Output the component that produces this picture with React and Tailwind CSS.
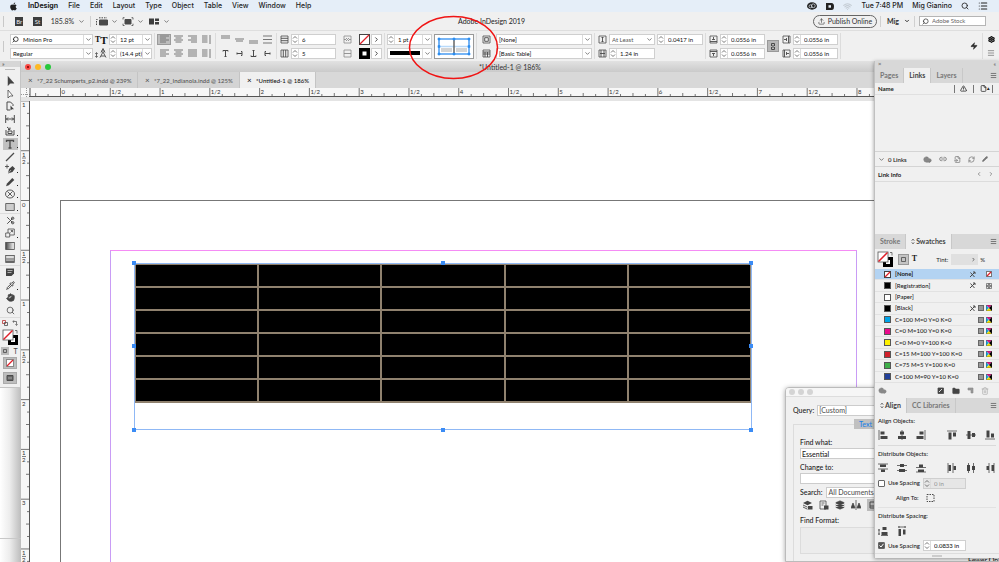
import { ChevronDown, ChevronRight, ChevronLeft, Search, Wifi, List, Hand, Scissors, Pipette, Pencil, Link2, RefreshCw, Cloud, Trash2, Folder, Layers, TriangleAlert, File, FileInput, Upload, Settings, Zap, Menu } from "lucide-react";
import { FaApple } from "react-icons/fa";

const MENUS = ["File", "Edit", "Layout", "Type", "Object", "Table", "View", "Window", "Help"];

const SWATCHES = [
  { name: "[None]", kind: "none", locked: true },
  { name: "[Registration]", color: "#000000", kind: "registration", locked: true },
  { name: "[Paper]", color: "#ffffff", kind: "paper" },
  { name: "[Black]", color: "#000000", kind: "cmyk", locked: true },
  { name: "C=100 M=0 Y=0 K=0", color: "#00a3e8", kind: "cmyk" },
  { name: "C=0 M=100 Y=0 K=0", color: "#ea0a8c", kind: "cmyk" },
  { name: "C=0 M=0 Y=100 K=0", color: "#fff200", kind: "cmyk" },
  { name: "C=15 M=100 Y=100 K=0", color: "#d0202a", kind: "cmyk" },
  { name: "C=75 M=5 Y=100 K=0", color: "#3fae49", kind: "cmyk" },
  { name: "C=100 M=90 Y=10 K=0", color: "#21409a", kind: "cmyk" },
];

// half an inch on the rulers, in px
const HALF = 49.78;

/* ---------- small building blocks ---------- */

function Sep() {
  return <span className="w-px h-[26px] bg-[#dcdcdc] shrink-0" />;
}

function Icon({ children, w = 10, h = 10, className = "" }) {
  return (
    <svg width={w} height={h} viewBox={`0 0 ${w} ${h}`} fill="none" stroke="#4a4a4a" strokeWidth="1" className={`shrink-0 ${className}`}>
      {children}
    </svg>
  );
}

function Chevron() {
  return <ChevronDown size={7} strokeWidth={2.5} className="text-[#555] shrink-0" />;
}

function SpinArrows() {
  return (
    <Icon w={6} h={9}>
      <path d="M1 3.5 3 1.5 5 3.5M1 5.5 3 7.5 5 5.5" stroke="#555" strokeWidth=".8" />
    </Icon>
  );
}

function SelectBox({ label, value, className = "", boxed = true, children }) {
  return (
    <label className={`flex items-center h-[11px] bg-white border border-[#cfcfcf] ${className}`}>
      {children}
      <select aria-label={label} className="flex-1 min-w-0 appearance-none bg-transparent pl-[2px] text-[6px] leading-[9px] outline-none">
        <option>{value}</option>
      </select>
      <span className={boxed ? "w-[9px] h-full grid place-items-center border-l border-[#dcdcdc]" : "w-[9px] h-full grid place-items-center"}>
        <Chevron />
      </span>
    </label>
  );
}

function Spin({ label, value, className = "", menu = false, disabled = false }) {
  return (
    <label className={`flex items-center h-[11px] border border-[#cfcfcf] ${disabled ? "bg-[#e6e6e6] text-[#999]" : "bg-white"} ${className}`}>
      <SpinArrows />
      <input aria-label={label} defaultValue={value} disabled={disabled} className="flex-1 min-w-0 border-l border-[#dcdcdc] pl-[3px] text-[6px] leading-[9px] h-full bg-transparent outline-none" />
      {menu && (
        <span className="w-[9px] h-full grid place-items-center border-l border-[#dcdcdc]">
          <Chevron />
        </span>
      )}
    </label>
  );
}

function Pair({ children, className = "" }) {
  return <div className={`flex flex-col gap-[3px] shrink-0 ${className}`}>{children}</div>;
}

function Cell({ children, label, on = false, className = "" }) {
  return (
    <button aria-label={label} className={`h-[11px] grid place-items-center ${on ? "bg-[#bdbdbd] border border-[#9b9b9b]" : ""} ${className}`}>
      {children}
    </button>
  );
}

function NoneBox({ size = 10, border = "#444" }) {
  return (
    <Icon w={size} h={size}>
      <rect x=".5" y=".5" width={size - 1} height={size - 1} fill="#fff" stroke={border} />
      <path d={`M1 ${size - 1} ${size - 1} 1`} stroke="#e0202a" strokeWidth="1.3" />
    </Icon>
  );
}

function FillStroke() {
  return (
    <Icon w={17} h={17}>
      <rect x="7.5" y="7.5" width="7" height="7" stroke="#000" strokeWidth="3" fill="#fff" />
      <rect x="1" y="1" width="10" height="10" fill="#fff" stroke="#555" strokeWidth=".8" />
      <path d="M1.5 10.5 10.5 1.5" stroke="#e0202a" strokeWidth="1.5" />
      <path d="M13 1.5h2v3" stroke="#555" strokeWidth=".8" />
    </Icon>
  );
}

/* ---------- top bars ---------- */

function MenuBar() {
  return (
    <header className="h-3 shrink-0 flex items-center justify-between bg-[#e5eef8] pl-[9px] pr-[11px] font-['Inter',sans-serif] text-[7px] leading-[12px] font-medium text-[#222]">
      <nav className="flex items-center gap-[10px]">
        <a href="#apple" aria-label="Apple"><FaApple size={9} /></a>
        <a href="#app" className="font-bold">InDesign</a>
        {MENUS.map((m) => (
          <a href="#menu" key={m}>{m}</a>
        ))}
      </nav>
      <div className="flex items-center gap-[9px]">
        <Icon w={10} h={8}>
          <ellipse cx="5" cy="4" rx="5" ry="3.7" fill="#222" stroke="none" />
          <circle cx="3.5" cy="4.3" r="1.5" stroke="#e5eef8" strokeWidth=".7" />
          <circle cx="6.3" cy="3.8" r="1.9" stroke="#e5eef8" strokeWidth=".7" />
        </Icon>
        <Icon w={8} h={7}>
          <path d="M0 0h5.5a2.5 3.5 0 0 1 0 7H0z" fill="#222" stroke="none" />
          <path d="M2.5 2.2h2.5v2.5H2.5z" fill="#e5eef8" stroke="none" />
        </Icon>
        <Wifi size={9} strokeWidth={3} className="text-[#c4ccd4]" />
        <span>Tue 7:48 PM</span>
        <span>Mig Gianino</span>
        <Search size={8} strokeWidth={2.5} />
        <List size={10} strokeWidth={2.5} />
      </div>
    </header>
  );
}

function AppBar() {
  return (
    <div className="h-[19px] shrink-0 flex items-center bg-[#f0f0f0] border-b border-[#dedede] text-[7px] text-[#333]">
      <div className="flex items-center w-[170px] pl-[3px]">
        <span className="w-px h-[11px] bg-[#c8c8c8] mr-[11px]" />
        <span className="w-[9px] h-[9px] bg-[#3d3d3d] text-[#eee] text-[6px] leading-[9px] text-center mr-[10px]">Br</span>
        <span className="w-[9px] h-[9px] bg-[#3d3d3d] text-[#eee] text-[6px] leading-[9px] text-center mr-[9px]">St</span>
        <label className="flex items-center w-[37px]">
          <select aria-label="Zoom level" className="flex-1 min-w-0 appearance-none bg-transparent outline-none">
            <option>185.8%</option>
          </select>
          <Chevron />
        </label>
        <span className="w-px h-[11px] bg-[#d0d0d0] mx-[5px]" />
        <div className="flex items-center gap-[2px]">
          <Icon w={12} h={9} className="mr-px"><path d="M3.5 3h8v5h-8z" fill="#4a4a4a" /><path d="M.5 8V2.5h2M3 .8h8" strokeDasharray="1.5 1" /></Icon>
          <Chevron />
          <Icon w={12} h={9} className="ml-[2px] mr-px"><path d="M3 2.5h6v4.5H3z" fill="#4a4a4a" /><path d="M1 2.5V.7h1.500M9.500.7H11v1.800M11 6.700v1.800H9.500M2.500 8.500H1V6.700" strokeWidth=".8" /></Icon>
          <Chevron />
          <Icon w={12} h={9} className="ml-[2px] mr-px"><path d="M1 1.5h5v6H1zM7 1.5h4v2.5H7zM7 5h4v2.5H7z" fill="#3d3d3d" stroke="none" /></Icon>
          <Chevron />
        </div>
      </div>
      <h1 className="flex-1 text-center text-[#222]">Adobe InDesign 2019</h1>
      <div className="flex items-center pr-[13px]">
        <button className="flex items-center justify-center gap-[3px] w-[64px] h-[13px] rounded-full border border-[#666] text-[7px] whitespace-nowrap">
          <Upload size={7} strokeWidth={2} />Publish Online
        </button>
        <span className="w-px h-[11px] bg-[#d0d0d0] mx-[3px]" />
        <button className="flex items-center justify-between w-[23px] ml-[3px] font-bold text-[7px]">
          Mig<ChevronDown size={6} strokeWidth={4} />
        </button>
        <span className="w-px h-[11px] bg-[#d0d0d0] ml-[4px] mr-[4px]" />
        <label className="flex items-center w-[67px] h-[10px] bg-white border border-[#b5b5b5] pl-[2px] gap-[3px]">
          <Search size={7} strokeWidth={2.5} className="-scale-x-100" />
          <input aria-label="Search Adobe Stock" placeholder="Adobe Stock" className="min-w-0 flex-1 text-[6px] leading-[8px] outline-none placeholder:text-[#666]" />
        </label>
      </div>
    </div>
  );
}

const LINES = {
  left: "M0 1h9M0 3h6M0 5h9M0 7h6",
  center: "M0 1h9M1.5 3h6M0 5h9M1.5 7h6",
  right: "M0 1h9M3 3h6M0 5h9M3 7h6",
  full: "M0 1h9M0 3h9M0 5h9M0 7h9",
  spine: "M0 1h5.5M0 3h5.5M0 5h5.5M0 7h5.5M8 0v9",
};

function Lines({ kind }) {
  return (
    <Icon w={9} h={9}>
      <path d={LINES[kind]} stroke="#777" />
    </Icon>
  );
}

function BoxIcon({ d }) {
  return (
    <span className="h-[11px] grid place-items-center">
      <Icon w={9} h={9}>
        <path d="M1 1h7v7H1z" strokeWidth=".8" />
        <path d={d} strokeWidth=".9" />
      </Icon>
    </span>
  );
}

function StrokeProxy() {
  return (
    <button aria-label="Cell border proxy" className="w-10 h-[25px] bg-white border border-[#999] grid place-items-center shrink-0">
      <svg width="36" height="21" viewBox="0 0 36 21">
        <rect x="5" y="12" width="11" height="4" fill="#d4d4d4" />
        <rect x="20" y="12" width="11" height="4" fill="#d4d4d4" />
        <path d="M3 10.5h30" stroke="#b9dafa" strokeWidth="1.500" />
        <path d="M18 3v15" stroke="#666" strokeWidth="1.500" />
        <rect x="3" y="3" width="30" height="15" fill="none" stroke="#2d8df0" strokeWidth="1.300" />
        <path d="M2 2h2v2H2zM17 2h2v2h-2zM32 2h2v2h-2zM2 9.5h2v2H2zM32 9.5h2v2h-2zM2 17h2v2H2zM17 17h2v2h-2zM32 17h2v2h-2z" fill="#2d8df0" stroke="#2d8df0" strokeWidth=".6" />
      </svg>
    </button>
  );
}

function ControlBar() {
  return (
    <div className="h-[30px] shrink-0 flex items-center gap-[2px] bg-[#f0f0f0] pl-[3px] pr-[4px] text-[6px] text-[#111]">
      <span className="w-px h-[11px] bg-[#c8c8c8] mr-[4px]" />
      <Pair className="w-[83px]">
        <SelectBox label="Font" value="Minion Pro">
          <Search size={7} strokeWidth={2.5} className="-scale-x-100 ml-px mr-[2px]" />
        </SelectBox>
        <SelectBox label="Font style" value="Regular" />
      </Pair>
      <Pair className="w-3">
        <span className="h-[11px] flex items-end leading-[10px] font-['Liberation_Serif',serif] font-bold"><span className="text-[8px]">T</span><span className="text-[11px]">T</span></span>
        <span className="h-[11px] grid place-items-center">
          <Icon w={12} h={10}><path d="M1.5 5v4M.3 6 1.5 4.5 2.7 6M.3 8 1.5 9.500 2.700 8" strokeWidth=".8" /><path d="M6 4.500 8 .5l2 4M6.500 3h3M5 9.500 8 4l3 5.500M6 8h4" strokeWidth=".9" /></Icon>
        </span>
      </Pair>
      <Pair className="w-[43px]">
        <Spin label="Font size" value="12 pt" menu />
        <Spin label="Leading" value="(14.4 pt)" menu />
      </Pair>
      <Sep />
      <div className="grid grid-cols-4 gap-y-[3px] w-14 shrink-0">
        <Cell label="Align left" on><Lines kind="left" /></Cell>
        <Cell label="Align center"><Lines kind="center" /></Cell>
        <Cell label="Align right"><Lines kind="right" /></Cell>
        <Cell label="Align towards spine"><Lines kind="spine" /></Cell>
        <Cell label="Justify left"><Lines kind="left" /></Cell>
        <Cell label="Justify center"><Lines kind="center" /></Cell>
        <Cell label="Justify all"><Lines kind="full" /></Cell>
        <Cell label="Align away from spine"><Lines kind="spine" /></Cell>
      </div>
      <Sep />
      <div className="grid grid-cols-4 gap-y-[3px] w-14 shrink-0">
        <Cell label="Top"><Icon w={9} h={9}><path d="M0 1h9M0 3h9" stroke="#777" strokeWidth="1.200" /></Icon></Cell>
        <Cell label="Middle"><Icon w={9} h={9}><path d="M0 4h9M1 6h7" stroke="#777" strokeWidth="1.200" /></Icon></Cell>
        <Cell label="Bottom"><Icon w={9} h={9}><path d="M0 6h9M0 8h9" stroke="#777" strokeWidth="1.200" /></Icon></Cell>
        <Cell label="Justify vertically"><Icon w={9} h={9}><path d="M0 1h9M0 4.5h9M0 8h9" stroke="#777" /></Icon></Cell>
        <Cell label="Rotate 0"><Icon w={9} h={9}><path d="M2 2.5V1.5h5v1M4.5 1.5v6M3.5 7.5h2" /></Icon></Cell>
        <Cell label="Rotate 90"><Icon w={9} h={9}><path d="M6 2.5h1v4H6M7 4.5H2M2 3.5v2" /></Icon></Cell>
        <Cell label="Rotate 180"><Icon w={9} h={9}><path d="M2 6.5v1h5v-1M4.5 7.5v-6M3.5 1.5h2" /></Icon></Cell>
        <Cell label="Rotate 270"><Icon w={9} h={9}><path d="M3 2.5H2v4h1M2 4.5h5M7 3.5v2" /></Icon></Cell>
      </div>
      <Sep />
      <Pair className="w-[10px]">
        <BoxIcon d="M1 3.3h7M1 5.7h7" />
        <BoxIcon d="M3.3 1v7M5.7 1v7" />
      </Pair>
      <Pair className="w-[45px]">
        <Spin label="Rows" value="6" />
        <Spin label="Columns" value="5" />
      </Pair>
      <Pair className="w-[19px] opacity-60">
        <BoxIcon d="M1 4.5h2M8 4.5H6M3 3l1.5 1.5L3 6M6 3 4.5 4.5 6 6" />
        <BoxIcon d="M1 4.5h7" />
      </Pair>
      <div className="grid grid-cols-2 gap-x-px gap-y-[3px] w-[23px] shrink-0">
        <Cell label="Fill"><NoneBox size={11} /></Cell>
        <Cell label="Fill options" className="bg-white border border-[#cfcfcf]"><ChevronRight size={7} strokeWidth={2.5} /></Cell>
        <Cell label="Stroke"><Icon w={11} h={11}><path d="M0 0h11v11H0z" fill="#000" stroke="none" /><path d="M3.5 3.5h4v4h-4z" fill="#fff" stroke="none" /></Icon></Cell>
        <Cell label="Stroke options" className="bg-white border border-[#cfcfcf]"><ChevronRight size={7} strokeWidth={2.5} /></Cell>
      </div>
      <Sep />
      <Pair className="w-[45px]">
        <Spin label="Stroke weight" value="1 pt" menu />
        <button aria-label="Stroke type" className="flex items-center h-[11px] bg-white border border-[#cfcfcf]">
          <span className="flex-1 h-[4px] bg-black mx-[2px]" />
          <span className="w-[9px] h-full grid place-items-center border-l border-[#dcdcdc]"><Chevron /></span>
        </button>
      </Pair>
      <StrokeProxy />
      <Sep />
      <Pair className="w-[15px]">
        <BoxIcon d="M2.7 2.7h3.6v3.6H2.7z" />
        <BoxIcon d="M1 3h7M1 5h7M3 3v5M5.5 3v5" />
      </Pair>
      <Pair className="w-[96px]">
        <SelectBox label="Cell style" value="[None]" />
        <SelectBox label="Table style" value="[Basic Table]" />
      </Pair>
      <Sep />
      <Pair className="w-[10px]">
        <BoxIcon d="M4.5 2v5M3.5 3l1-1 1 1M3.5 6l1 1 1-1" />
        <BoxIcon d="M2 4.5h5M3 1v7M6 1v7" />
      </Pair>
      <Pair className="w-[46px]">
        <SelectBox label="Row height mode" value="At Least" boxed={false} className="text-[#555]" />
        <Spin label="Column width" value="1.24 in" />
      </Pair>
      <Pair className="w-[46px]">
        <Spin label="Row height" value="0.0417 in" />
        <span className="h-[11px]" />
      </Pair>
      <Sep />
      <Pair className="w-[10px]">
        <BoxIcon d="M1 6.5h7M3 4.5h3M4.5 2v2.5" />
        <BoxIcon d="M1 2.5h7M3 4.5h3M4.5 4.5V7" />
      </Pair>
      <Pair className="w-[45px]">
        <Spin label="Top inset" value="0.0556 in" />
        <Spin label="Bottom inset" value="0.0556 in" />
      </Pair>
      <button aria-label="Make all settings the same" className="w-3 h-3 bg-[#b8b8b8] border border-[#999] grid place-items-center shrink-0">
        <Icon w={6} h={9}><path d="M1.5 4V1.5h3V4M1.5 5v2.5h3V5M3 3v3" /></Icon>
      </button>
      <Pair className="w-[10px]">
        <BoxIcon d="M6.5 1v7M4.5 3v3M2 4.5h2.5" />
        <BoxIcon d="M2.5 1v7M4.5 3v3M4.5 4.5H7" />
      </Pair>
      <Pair className="w-[45px]">
        <Spin label="Left inset" value="0.0556 in" />
        <Spin label="Right inset" value="0.0556 in" />
      </Pair>
      <Sep />
      <div className="ml-auto flex items-center gap-[4px]">
        <Zap size={8} fill="#333" strokeWidth={1} />
        <Sep />
        <Pair>
          <Cell label="Customize"><Settings size={7} strokeWidth={4} /></Cell>
          <Cell label="Panel menu"><Menu size={8} strokeWidth={2} className="text-[#666]" /></Cell>
        </Pair>
      </div>
    </div>
  );
}

/* ---------- tools ---------- */

const K = "#444";
const TOOL_GROUPS = [
  {
    cls: "h-[139px]",
    tools: [
      { name: "Selection", art: <path d="M3 .5v9l2.3-2.3H9z" fill={K} stroke={K} strokeWidth=".5" /> },
      { name: "Direct selection", art: <path d="M3 1v8l2-2h3z" fill="#fff" strokeWidth=".8" /> },
      { name: "Page", art: <><path d="M2 9V1h3.5L8 3.5V5M2 9h3" /><path d="M5.5 4.5v5l1.5-1.3h2z" fill={K} stroke="none" /></> },
      { name: "Gap", art: <path d="M.7 1v8M9.3 1v8M1 5h8M3 3.5 1.5 5 3 6.5M7 3.5 8.5 5 7 6.5" /> },
      { name: "Content collector", more: true, art: <><path d="M1 4v5h8V4M3 5h4v2.5H3z" /><path d="M2 1l3 2.5V1.5M5 3.5H3" /></> },
      { name: "Type", on: true, more: true, art: <path d="M1.5 3V1.5h7V3M5 1.5v7.500M3.500 9h3" strokeWidth="1.300" /> },
      { name: "Line", art: <path d="M1 9 9 1" strokeWidth="1.200" /> },
      { name: "Pen", more: true, art: <><path d="M3 9.500 4 5l3.500-3L10 4.500 7.500 8z" fill={K} stroke="none" /><path d="M3 9.500 6 6" stroke="#eee" strokeWidth=".6" /><path d="M0 2.500h4M2 .5v4" strokeWidth=".9" /></> },
      { name: "Pencil", more: true, art: <path d="M1 9.300 2 6.500 7.300 1l2 2L3.800 8.300z" fill={K} stroke="none" /> },
      { name: "Frame", more: true, art: <><ellipse cx="5" cy="5" rx="4.5" ry="4" strokeWidth=".9" /><path d="M2.5 2.5l5 5M7.5 2.5l-5 5" strokeWidth=".9" /></> },
      { name: "Rectangle", more: true, art: <path d="M.7 1.5h8.6v7H.7z" fill="#ccc" strokeWidth=".8" /> },
    ],
  },
  {
    cls: "h-[52px]",
    tools: [
      { name: "Scissors", node: <Scissors size={9} strokeWidth={2.5} className="rotate-180" /> },
      { name: "Free transform", more: true, art: <><path d="M.7 5h4v4h-4z" strokeWidth=".8" /><path d="M3 5V1h6.300v6H5M5.5 4.5l2-2M5.8 2.5h1.7v1.7" strokeWidth=".8" /></> },
      { name: "Gradient swatch", art: <><rect x=".7" y="1.5" width="8.6" height="7" fill="url(#grad)" strokeWidth=".8" /></> },
      { name: "Gradient feather", art: <><rect x=".7" y="1.5" width="8.6" height="7" fill="#ddd" strokeWidth=".8" /><path d="M1 5h8" strokeWidth="1.500" stroke="#888" /><path d="M1 7.300h8" strokeWidth="1.500" stroke="#666" /></> },
    ],
  },
  {
    cls: "h-[52px]",
    tools: [
      { name: "Note", art: <><path d="M1 1.5h8v5L6.5 9H1z" fill={K} stroke="none" /><path d="M2.5 3.5h5M2.5 5.5h4" stroke="#ddd" strokeWidth=".7" /></> },
      { name: "Eyedropper", more: true, node: <Pipette size={9} strokeWidth={2.5} /> },
      { name: "Hand", node: <Hand size={9} fill="#444" strokeWidth={2} /> },
      { name: "Zoom", node: <Search size={9} strokeWidth={2} /> },
    ],
  },
];

function Toolbox() {
  return (
    <aside className="w-[21px] shrink-0 flex flex-col bg-[linear-gradient(to_right,#fff,#ededed_45%,#bcbcbc)]">
      <div className="bg-[#f0f0f0] border-r border-b border-[#c4c4c4] text-[#444] flex flex-col">
        <div className="h-[6px] bg-[#d6d6d6] pl-[2px] text-[6px] leading-[5px]">»</div>
        <div className="h-[8px] flex justify-center pt-[2px]"><span className="w-[10px] h-px bg-[#bbb]" /></div>
        {TOOL_GROUPS.map((g) => (
          <div key={g.tools[0].name} className={`${g.cls} flex flex-col items-center border-b border-[#dcdcdc]`}>
            {g.tools.map((t) => (
              <button key={t.name} aria-label={t.name} className={`flex-1 w-[15px] relative grid place-items-center ${t.on ? "bg-[#c0c0c0]" : ""}`}>
                {t.node || (
                  <Icon>
                    <defs><linearGradient id="grad"><stop stopColor="#444" /><stop offset="1" stopColor="#fff" /></linearGradient></defs>
                    {t.art}
                  </Icon>
                )}
                {t.more && <span className="absolute right-0 bottom-[2px] w-px h-px bg-[#222]" />}
              </button>
            ))}
          </div>
        ))}
        <div className="h-[10px] flex items-center justify-center gap-[4px]">
          <Icon w={6} h={6}><path d="M.5.5h3v3h-3z" stroke="#b33" strokeWidth=".8" /><path d="M2.5 2.5h3v3h-3z" strokeWidth=".8" /></Icon>
          <Icon w={6} h={6}><path d="M1 1.5h3.5V5M2 .3.8 1.5 2 2.7M3.3 4.3l1.2 1.2 1.2-1.2" strokeWidth=".7" /></Icon>
        </div>
        <div className="h-[18px] grid place-items-center"><FillStroke /></div>
        <div className="h-[10px] flex items-center justify-center gap-[3px]">
          <button aria-label="Formatting affects container" className="w-[8px] h-[8px] bg-[#bbb] grid place-items-center"><Icon w={4} h={4}><path d="M.5.5h3v3h-3z" strokeWidth=".8" /></Icon></button>
          <button aria-label="Formatting affects text" className="w-[7px] text-[7px] leading-[8px]">T</button>
        </div>
        <button aria-label="Apply none" className="mx-[3px] mt-px h-[12px] bg-[#bdbdbd] border border-[#aaa] grid place-items-center"><NoneBox size={8} border="#888" /></button>
        <button aria-label="Screen mode" className="mx-[3px] my-[3px] h-[12px] bg-[#bdbdbd] border border-[#aaa] grid place-items-center">
          <Icon w={8} h={8}><path d="M1 1.5h6v5H1z" fill="#666" /><path d="M2.5 4h3" stroke="#ddd" strokeDasharray="1 1" /></Icon>
        </button>
      </div>
      <div className="mt-auto h-6 border-t border-[#c8c8c8]" />
    </aside>
  );
}

/* ---------- document window ---------- */

const TABS = [
  { name: "*7_22 Schumperts_p2.indd @ 239%", cls: "w-[117px] bg-[#d4d4d4] text-[#555]" },
  { name: "*7_22_Indianola.indd @ 125%", cls: "w-[102px] bg-[#d4d4d4] text-[#555]" },
  { name: "*Untitled-1 @ 186%", cls: "w-[76px] bg-[#f0f0f0] text-[#111]" },
];

function HRuler() {
  const ticks = [];
  for (let i = -2; i < 76; i++) ticks.push(i);
  return (
    <svg className="w-full h-[9px] bg-[#f7f7f7] shrink-0" fill="none" stroke="#555">
      {ticks.map((i) => {
        const x = 39.5 + (i * HALF) / 4;
        const major = i % 4 === 0;
        return (
          <g key={i}>
            <path d={`M${x} ${major ? 0 : i % 2 === 0 ? 5 : 6}V9`} strokeWidth=".8" />
            {major && (
              <text x={x + 1} y="6" fontSize="6" fill="#333" stroke="none">{i % 8 === 0 ? i / 8 : "1/2"}</text>
            )}
          </g>
        );
      })}
      <path d="M0 6.5h9M5.5 0v9" strokeDasharray="1 1" strokeWidth=".6" />
      <path d="M9 0v9" />
      <path d="M8 8.5h990" />
    </svg>
  );
}

function VRuler() {
  const ticks = [];
  for (let i = -8; i < 32; i++) ticks.push(i);
  return (
    <svg className="w-[9px] h-full bg-[#f7f7f7] shrink-0" fill="none" stroke="#555">
      {ticks.map((i) => {
        const y = 99.5 + (i * HALF) / 4;
        const major = i % 4 === 0;
        return (
          <g key={i}>
            <path d={`M${major ? 0 : i % 2 === 0 ? 5 : 6} ${y}H9`} strokeWidth=".8" />
            {major && i % 8 === 0 && (
              <text x="1" y={y + 6} fontSize="6" fill="#333" stroke="none">{Math.abs(i / 8)}</text>
            )}
            {major && i % 8 !== 0 && (
              <g fill="#333" stroke="none" fontSize="6">
                <text x="1" y={y + 6}>1</text>
                <text x="1" y={y + 13}>2</text>
                <path d={`M1 ${y + 7}h4v.6h-4z`} />
              </g>
            )}
          </g>
        );
      })}
      <path d="M8.5 0v600" />
    </svg>
  );
}

const HANDLES = [
  "left-[-2px] top-[-2px]",
  "left-[307px] top-[-2px]",
  "right-[-1px] top-[-2px]",
  "left-[-2px] top-[81px]",
  "right-[-1px] top-[81px]",
  "left-[-2px] bottom-[-2px]",
  "left-[307px] bottom-[-2px]",
  "right-[-1px] bottom-[-2px]",
];

function Canvas() {
  return (
    <div className="relative flex-1 overflow-hidden bg-white">
      {/* page edge and margin guides */}
      <div className="absolute left-[30px] top-[99px] w-[847px] h-[1096px] border border-[#777]" />
      <div className="absolute left-[80px] top-[149px] w-[747px] h-[996px] border border-[#c99cf5] border-t-[#f58cf5]" />

      {/* selected text frame holding the table */}
      <div className="absolute left-[104px] top-[162px] w-[618px] h-[167px] outline outline-[#8fb8f5] outline-offset-[-1px]">
        <table className="w-full h-[140px] border-collapse bg-black">
          <tbody>
            {[0, 1, 2, 3, 4, 5].map((r) => (
              <tr key={r}>
                {[0, 1, 2, 3, 4].map((c) => (
                  <td key={c} className="border-2 border-[#8f816e]" />
                ))}
              </tr>
            ))}
          </tbody>
        </table>
        {HANDLES.map((h) => (
          <span key={h} className={`absolute w-1 h-1 bg-[#3b8cf5] ${h}`} />
        ))}
      </div>
    </div>
  );
}

function DocumentWindow() {
  return (
    <section className="flex-1 min-w-0 flex flex-col">
      <div className="h-[11px] shrink-0 flex items-center bg-[linear-gradient(#e2e2e2,#cacaca)] rounded-t-sm">
        <div className="flex gap-[4px] pl-[4px] w-[134px]">
          <button aria-label="Close" className="w-[6px] h-[6px] rounded-full bg-[#fb4943] grid place-items-center"><span className="w-[2px] h-[2px] rounded-full bg-[#700]" /></button>
          <button aria-label="Minimize" className="w-[6px] h-[6px] rounded-full bg-[#fdb924]" />
          <button aria-label="Zoom" className="w-[6px] h-[6px] rounded-full bg-[#28c83c]" />
        </div>
        <h2 className="flex-1 text-center pr-[134px] text-[7px] leading-[10px] text-[#333]">*Untitled-1 @ 186%</h2>
      </div>
      <div className="h-4 shrink-0 flex bg-[#d8d8d8]">
        {TABS.map((t) => (
          <button key={t.name} className={`flex items-center pl-[7px] gap-[5px] border-r border-[#c4c4c4] text-[6px] font-medium whitespace-nowrap ${t.cls}`}>
            <span className="w-1 text-[8px]">×</span>{t.name}
          </button>
        ))}
      </div>
      <HRuler />
      <div className="h-1 shrink-0 bg-[#e4e4e4]" />
      <div className="flex-1 min-h-0 flex">
        <VRuler />
        <Canvas />
      </div>
    </section>
  );
}

/* ---------- floating panels ---------- */

function PanelTabs({ tabs, active }) {
  return (
    <div className="h-[15px] shrink-0 flex items-stretch bg-[#d8d8d8] text-[7px]">
      {tabs.map((t) => (
        <button key={t} className={`px-[5px] flex items-center gap-px border-r border-[#c8c8c8] font-bold whitespace-nowrap ${t === active ? "bg-[#f0f0f0] text-[#444]" : "text-[#777]"}`}>
          {t === active && t !== "Links" && <Icon w={4} h={7}><path d="M.7 2.8 2 1l1.300 1.800M.7 4.200 2 6l1.300-1.800" strokeWidth=".7" /></Icon>}
          {t}
        </button>
      ))}
      <button aria-label="Panel menu" className="ml-auto pr-[2px] text-[#555]"><Menu size={7} strokeWidth={2.5} /></button>
    </div>
  );
}

function LinksPanel() {
  return (
    <section>
      <PanelTabs tabs={["Pages", "Links", "Layers"]} active="Links" />
      <div className="h-3 flex items-center pl-[3px] pr-[6px] border-b border-[#e0e0e0] text-[6px] font-bold">
        <span className="flex-1">Name</span>
        <span className="w-px h-[8px] bg-[#777] mr-[5px]" />
        <TriangleAlert size={7} strokeWidth={2.5} />
        <span className="w-px h-[8px] bg-[#777] mx-[6px]" />
        <File size={7} strokeWidth={2.5} />
        <span className="w-[5px] text-[5px]">▴</span>
        <span className="w-px h-[8px] bg-[#777]" />
      </div>
      <div className="h-[56px]" />
      <div className="h-4 flex items-center border-y border-[#d4d4d4] pl-[3px] pr-[11px] text-[6px] font-semibold">
        <Chevron />
        <span className="flex-1 pl-[3px]">0 Links</span>
        <div className="flex items-center gap-[7px] text-[#777]">
          <Cloud size={9} fill="#888" strokeWidth={1.5} />
          <Link2 size={8} strokeWidth={2.5} />
          <FileInput size={7} strokeWidth={2.5} />
          <RefreshCw size={7} strokeWidth={2.5} />
          <Pencil size={6} fill="#777" strokeWidth={2.5} />
        </div>
      </div>
      <div className="h-[15px] flex items-center pl-[3px] pr-[5px] border-b border-[#dcdcdc] text-[6px] font-bold">
        <span className="flex-1">Link Info</span>
        <ChevronLeft size={6} strokeWidth={3} className="mr-[6px] text-[#777]" />
        <ChevronRight size={6} strokeWidth={3} className="text-[#777]" />
      </div>
      <div className="h-[52px]" />
    </section>
  );
}

function CmykIcon() {
  return (
    <svg width="6" height="6" viewBox="0 0 6 6">
      <path d="M0 0h6L3 3z" fill="#e5188c" />
      <path d="M0 0v6l3-3z" fill="#19a7e0" />
      <path d="M0 6h6L3 3z" fill="#f5e400" />
      <path d="M6 0v6L3 3z" fill="#000" />
      <path d="M0 0h6v6H0z" fill="none" stroke="#333" strokeWidth=".5" />
    </svg>
  );
}

function SwatchesPanel() {
  return (
    <section>
      <PanelTabs tabs={["Stroke", "Swatches"]} active="Swatches" />
      <div className="h-5 flex items-center pl-[2px] pr-[14px] text-[6px]">
        <FillStroke />
        <button aria-label="Container" className="w-[11px] h-[11px] ml-[4px] bg-[#c4c4c4] border border-[#999] grid place-items-center"><Icon w={5} h={5}><path d="M.5.5h4v4h-4z" strokeWidth=".8" /></Icon></button>
        <button aria-label="Text" className="w-[9px] ml-px font-['Liberation_Serif',serif] font-bold text-[8px]">T</button>
        <label className="flex items-center ml-auto gap-[3px]">
          Tint:
          <input aria-label="Tint" className="w-[18px] h-[11px] bg-[#e0e0e0]" disabled />
        </label>
        <span className="w-[9px] h-[11px] bg-[#e0e0e0] grid place-items-center mr-[2px]"><ChevronRight size={5} strokeWidth={3} /></span>
        %
      </div>
      <ul className="h-[114px] flex flex-col">
        {SWATCHES.map((s) => (
          <li key={s.name} className={`flex-1 flex items-center pl-[9px] pr-[7px] border-b border-[#e2e2e2] text-[6px] ${s.kind === "none" ? "bg-[#b3d3f2] font-bold" : "font-medium"}`}>
            {s.kind === "none" ? <NoneBox size={7} /> : <span className="w-[7px] h-[7px] border border-[#555]" style={{ backgroundColor: s.color }} />}
            <span className="flex-1 pl-[4px] leading-[10px] whitespace-nowrap">{s.name}</span>
            {s.locked && <Icon w={7} h={7} className={s.kind === "cmyk" ? "mr-[2px]" : "mr-[10px]"}><path d="M1 6 6 1M1.5 1.5l4 4.5M4 1h2v2" /></Icon>}
            {s.kind === "none" && <NoneBox size={6} border="#777" />}
            {s.kind === "registration" && <Icon w={6} h={6}><path d="M.5.5h5v5h-5zM3 0v6M0 3h6" strokeWidth=".6" /><circle cx="3" cy="3" r="1.5" strokeWidth=".6" /></Icon>}
            {s.kind === "cmyk" && (
              <span className="flex gap-[2px]">
                <span className="w-[6px] h-[6px] bg-[#999] border border-[#666]" />
                <CmykIcon />
              </span>
            )}
          </li>
        ))}
      </ul>
      <div className="h-[15px] flex items-center pl-[3px] pr-[10px] gap-[7px] text-[#555]">
        <Cloud size={9} fill="#888" strokeWidth={1} className="mr-auto text-[#888]" />
        <Icon w={8} h={8}><path d="M1 1h5.5v5.5H1z" fill="#444" strokeWidth=".8" /><path d="M2 5 5 2" stroke="#ddd" /></Icon>
        <Folder size={8} fill="#444" strokeWidth={1.5} />
        <Icon w={7} h={7}><path d="M1 1h5v5H4V3H1z" fill="#999" stroke="#888" strokeWidth=".6" /></Icon>
        <Trash2 size={8} strokeWidth={2} className="text-[#aaa]" />
      </div>
    </section>
  );
}

const ALIGN = [
  ["Left edges", "M1 0v10", "M2.5 1.5h4v3h-4zM2.5 6h7v3h-7z"],
  ["Horizontal centers", "M5 0v10", "M3 1.5h4v3H3zM1 6h8v3H1z"],
  ["Right edges", "M9 0v10", "M3.5 1.5h4v3h-4zM.5 6h7v3h-7z"],
  ["Top edges", "M0 1h10", "M1.5 2.5h3v7h-3zM6 2.5h3v4H6z"],
  ["Vertical centers", "M0 5h10", "M1.5 1h3v8h-3zM6 3h3v4H6z"],
  ["Bottom edges", "M0 9h10", "M1.5.5h3v7h-3zM6 3.5h3v4H6z"],
];
const DISTRIBUTE = [
  ["Distribute top", "M0 1h10M0 6h10", "M2 1.5h6v2.5H2zM3 6.5h4V9H3z"],
  ["Distribute middle", "M0 2.5h10M0 7.5h10", "M3 1h4v3H3zM2 6h6v3H2z"],
  ["Distribute bottom", "M0 4.5h10M0 9h10", "M3 1.5h4v3H3zM2 6.5h6V9H2z"],
  ["Distribute left", "M1 0v10M6 0v10", "M1.5 2H4v6H1.5zM6.5 3H9v4H6.5z"],
  ["Distribute center", "M2.5 0v10M7.5 0v10", "M1 2h3v6H1zM6 3h3v4H6z"],
  ["Distribute right", "M4 0v10M9 0v10", "M1.5 3H4v4H1.5zM6.5 2H9v6H6.5z"],
];

function AlignRow({ items }) {
  return (
    <div className="h-[18px] flex items-center gap-[9px]">
      {items.map(([name, bar, boxes], i) => (
        <button key={name} aria-label={name} className={i === 3 ? "ml-3" : ""}>
          <Icon><path d={bar} strokeWidth=".8" /><path d={boxes} fill="#444" stroke="none" /></Icon>
        </button>
      ))}
    </div>
  );
}

function Check({ children, checked }) {
  return (
    <label className="flex items-center gap-[3px] w-[45px]">
      <span className="grid">
        <input type="checkbox" defaultChecked={checked} className="[grid-area:1/1] appearance-none w-[7px] h-[7px] rounded-[1px] border border-[#666] bg-white checked:bg-[#555] peer" />
        <svg width="7" height="7" viewBox="0 0 7 7" className="[grid-area:1/1] hidden peer-checked:block pointer-events-none">
          <path d="M1.5 3.5 3 5l2.5-3.2" fill="none" stroke="#fff" />
        </svg>
      </span>
      <span className="whitespace-nowrap">{children}</span>
    </label>
  );
}

function AlignPanel() {
  return (
    <section>
      <PanelTabs tabs={["Align", "CC Libraries"]} active="Align" />
      <div className="px-[3px] pt-[3px] text-[6px] leading-[10px] font-medium text-[#222]">
        <h3>Align Objects:</h3>
        <div className="border-b border-[#dadada] pb-px"><AlignRow items={ALIGN} /></div>
        <h3 className="pt-[3px]">Distribute Objects:</h3>
        <AlignRow items={DISTRIBUTE} />
        <div className="flex items-center h-[12px]">
          <Check>Use Spacing</Check>
          <Spin label="Distribute spacing" value="0 in" disabled className="w-[43px]" />
        </div>
        <div className="flex items-center h-[18px] pl-[18px] gap-[7px]">
          Align To:
          <button aria-label="Align to selection"><Icon><path d="M1 1.5h7v7H1z" strokeDasharray="1.5 1" /></Icon></button>
        </div>
        <h3 className="pt-[3px] border-t border-[#e2e2e2]">Distribute Spacing:</h3>
        <div className="h-[19px] flex items-center gap-[9px]">
          <button aria-label="Vertical space"><Icon><path d="M1 3v6M0 4h2M0 8h2M3 9.5h7" strokeWidth=".8" /><path d="M4.5 1h4v3h-4zM3.5 6h6v3h-6z" fill="#444" stroke="none" /></Icon></button>
          <button aria-label="Horizontal space"><Icon><path d="M1 1h8M2 0v2M8 0v2" strokeWidth=".8" /><path d="M1.5 3h2.5v7H1.5zM6 3.5h2.5v5H6z" fill="#444" stroke="none" /></Icon></button>
        </div>
        <div className="flex items-center h-[11px]">
          <Check checked>Use Spacing</Check>
          <Spin label="Spacing" value="0.0833 in" className="w-[43px]" />
        </div>
      </div>
      <div className="h-[5px] flex items-end justify-center mt-[2px] border-t border-[#ddd]"><span className="w-[10px] h-[2px] mb-px bg-[#ccc]" /></div>
    </section>
  );
}

function PanelDock() {
  return (
    <aside className="absolute right-0 top-0 w-[125px] bg-[#f0f0f0] border-l border-[#c0c0c0] shadow-[0_1px_4px_rgba(0,0,0,0.4)] text-[#222]">
      <div className="h-[7px] bg-[#d8d8d8] flex justify-between px-[3px] text-[6px] leading-[6px] text-[#555]">
        <span>×</span><span>«</span>
      </div>
      <LinksPanel />
      <SwatchesPanel />
      <AlignPanel />
    </aside>
  );
}

function FindChange() {
  return (
    <section className="absolute right-0 top-[326px] bottom-0 w-[214px] overflow-hidden bg-[#f0f0f0] rounded-tl border border-[#bbb] shadow-[0_1px_5px_rgba(0,0,0,0.35)] text-[7px] leading-[9px] font-medium text-[#222]">
      <div className="h-[9px] bg-[#f6f6f6] border-b border-[#ddd] flex items-center gap-[3px] pl-[3px]">
        <span className="w-[6px] h-[6px] rounded-full bg-[#d4d4d4]" />
        <span className="w-[6px] h-[6px] rounded-full bg-[#d4d4d4]" />
        <span className="w-[6px] h-[6px] rounded-full bg-[#d4d4d4]" />
      </div>
      <div className="pl-[7px] pr-2 pt-[8px]">
        <label className="flex items-center gap-[3px]">Query:
          <select className="flex-1 appearance-none h-[11px] bg-white border border-[#ccc] pl-px text-[#555]"><option>[Custom]</option></select>
        </label>
        <div className="border border-[#dcdcdc] mt-[8px] px-[6px] pt-[13px] h-[160px] relative flex flex-col">
          <button className="absolute left-[60px] top-[-6px] w-[34px] h-[10px] bg-[#c0c0c0] text-[#1a80e8] pl-[5px] text-left">Text</button>
          <label className="flex flex-col gap-px">Find what:
            <input defaultValue="Essential" className="h-[11px] bg-white border border-[#ccc] pl-px" />
          </label>
          <label className="flex flex-col gap-px mt-[4px]">Change to:
            <input className="h-[11px] bg-white border border-[#ccc] pl-px" />
          </label>
          <label className="flex items-center gap-[4px] mt-[3px]">Search:
            <select className="flex-1 appearance-none h-[11px] bg-white border border-[#ccc] pl-px text-[#555]"><option>All Documents</option></select>
          </label>
          <div className="flex items-center gap-[6px] h-[14px] pl-[3px] text-[#444]">
            <Icon><path d="M0 3 4.500.8 9 3 4.500 5.200z" fill="#444" stroke="none" /><path d="M0 5l4.500 2.200M0 7l4.500 2.200" strokeWidth=".9" /><path d="M5 6h4.500v3.500H5z" fill="#444" stroke="none" /></Icon>
            <Icon><path d="M1 1h6v8H1zM2.5 3h3M2.5 5h2" strokeWidth=".8" /><path d="M5 5.5h4.5v4H5z" fill="#444" stroke="none" /></Icon>
            <Layers size={10} fill="#444" strokeWidth={1.5} />
            <Icon><path d="M5 0v10M0 8l2-5 2 5zM6 8l2-5 2 5z" fill="#444" strokeWidth=".8" /></Icon>
            <span className="w-[12px] h-[12px] bg-[#bbb] grid place-items-center"><Icon w={8} h={8}><path d="M1 1h6v6H1zM1 5h6" /></Icon></span>
          </div>
          <span className="mt-[4px]">Find Format:</span>
          <div className="h-[27px] mt-[2px] border border-[#dcdcdc] bg-[#ececec]" />
        </div>
      </div>
      <button className="absolute left-[182px] bottom-[-4px] text-left whitespace-nowrap">Fewer Opt</button>
    </section>
  );
}

function App() {
  return (
    <div className="relative h-screen flex flex-col overflow-hidden bg-[#f0f0f0] font-['Lato','Open_Sans',sans-serif] text-[#222]">
      <MenuBar />
      <AppBar />
      <ControlBar />
      <main className="relative flex-1 min-h-0 flex">
        <Toolbox />
        <DocumentWindow />
        <FindChange />
        <PanelDock />
      </main>

      {/* red callout around the stroke proxy */}
      <svg className="absolute left-[408px] top-[15px] pointer-events-none" width="91" height="66" viewBox="0 0 91 66">
        <ellipse cx="45.5" cy="32.5" rx="44" ry="31" fill="none" stroke="#f01414" strokeWidth="1.5" />
      </svg>
    </div>
  );
}

export default App;
